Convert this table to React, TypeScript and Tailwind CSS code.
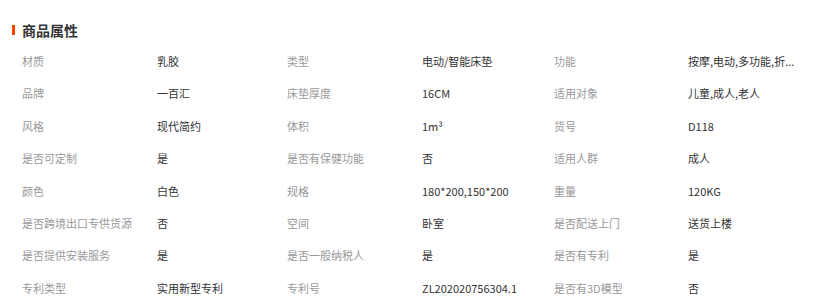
const rows: [string, string, string, string, string, string][] = [
  ["材质", "乳胶", "类型", "电动/智能床垫", "功能", "按摩,电动,多功能,折..."],
  ["品牌", "一百汇", "床垫厚度", "16CM", "适用对象", "儿童,成人,老人"],
  ["风格", "现代简约", "体积", "1m³", "货号", "D118"],
  ["是否可定制", "是", "是否有保健功能", "否", "适用人群", "成人"],
  ["颜色", "白色", "规格", "180*200,150*200", "重量", "120KG"],
  ["是否跨境出口专供货源", "否", "空间", "卧室", "是否配送上门", "送货上楼"],
  ["是否提供安装服务", "是", "是否一般纳税人", "是", "是否有专利", "是"],
  ["专利类型", "实用新型专利", "专利号", "ZL202020756304.1", "是否有3D模型", "否"],
];

export default function App() {
  return (
    <div
      className="w-[838px] h-[298px] bg-white overflow-hidden pt-[20px]"
      style={{ fontFamily: '"Noto Sans CJK SC", "Noto Sans", sans-serif' }}
    >
      <div className="flex items-center h-[20px] pl-[12px]">
        <span className="w-[3px] h-[10px] bg-[#ff4400]" />
        <h2 className="ml-[7px] text-[14px] font-bold text-[#333]">商品属性</h2>
      </div>

      <div className="mt-[5px] pl-[22px] grid grid-cols-[135px_130px_135px_132px_134px_1fr]">
        {rows.map((r, i) =>
          r.map((cell, j) => (
            <div
              key={i + "-" + j}
              className={
                "h-[32.4px] flex items-center text-[11px] whitespace-nowrap " +
                (j % 2 === 0 ? "text-[#999]" : "text-[#333]")
              }
            >
              {cell}
            </div>
          ))
        )}
      </div>
    </div>
  );
}
